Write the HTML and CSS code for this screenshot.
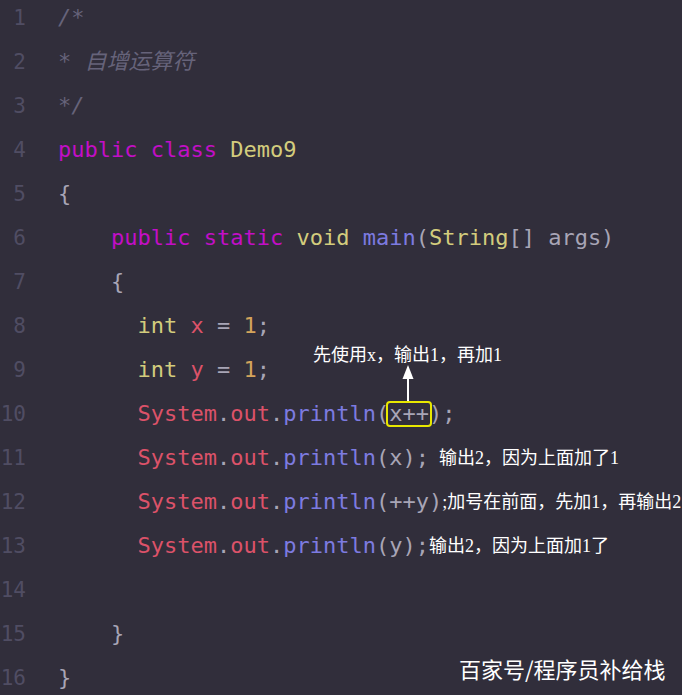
FILE: index.html
```html
<!DOCTYPE html>
<html lang="zh">
<head>
<meta charset="utf-8">
<title>Demo9</title>
<link rel="stylesheet" href="styles.css">
</head>
<body>
<div class="editor">
  <div class="code">
    <div class="line"><span class="ln">1</span><span class="src"><span class="cm">/*</span></span></div>
    <div class="line"><span class="ln">2</span><span class="src"><span class="cm">* 自增运算符</span></span></div>
    <div class="line"><span class="ln">3</span><span class="src"><span class="cm">*/</span></span></div>
    <div class="line"><span class="ln">4</span><span class="src"><span class="kw">public</span> <span class="kw">class</span> <span class="ty">Demo9</span></span></div>
    <div class="line"><span class="ln">5</span><span class="src">{</span></div>
    <div class="line"><span class="ln">6</span><span class="src">    <span class="kw">public</span> <span class="kw">static</span> <span class="ty">void</span> <span class="fn">main</span>(<span class="ty">String</span>[] args)</span></div>
    <div class="line"><span class="ln">7</span><span class="src">    {</span></div>
    <div class="line"><span class="ln">8</span><span class="src">      <span class="ty">int</span> <span class="var">x</span> = <span class="num">1</span>;</span></div>
    <div class="line"><span class="ln">9</span><span class="src">      <span class="ty">int</span> <span class="var">y</span> = <span class="num">1</span>;</span></div>
    <div class="line"><span class="ln">10</span><span class="src">      <span class="var">System</span>.<span class="var">out</span>.<span class="fn">println</span>(<span class="boxed">x++</span>);</span></div>
    <div class="line"><span class="ln">11</span><span class="src">      <span class="var">System</span>.<span class="var">out</span>.<span class="fn">println</span>(x);</span><span class="note gap">输出2，因为上面加了1</span></div>
    <div class="line"><span class="ln">12</span><span class="src">      <span class="var">System</span>.<span class="var">out</span>.<span class="fn">println</span>(++y)</span><span class="note">;加号在前面，先加1，再输出2</span></div>
    <div class="line"><span class="ln">13</span><span class="src">      <span class="var">System</span>.<span class="var">out</span>.<span class="fn">println</span>(y);</span><span class="note">输出2，因为上面加1了</span></div>
    <div class="line"><span class="ln">14</span><span class="src"></span></div>
    <div class="line"><span class="ln">15</span><span class="src">    }</span></div>
    <div class="line"><span class="ln">16</span><span class="src">}</span></div>
  </div>
  <div class="callout">先使用x，输出1，再加1</div>
  <svg class="arrow" width="14" height="36" viewBox="0 0 14 36">
    <polygon points="7,0 1.5,14 12.5,14" fill="#ffffff"/>
    <rect x="6" y="12" width="2" height="24" fill="#ffffff"/>
  </svg>
  <div class="watermark">百家号/程序员补给栈</div>
</div>
</body>
</html>
```
FILE: styles.css
```css
html, body {
  margin: 0;
  padding: 0;
  background: #312e3b;
}
.editor {
  position: relative;
  width: 682px;
  height: 695px;
  overflow: hidden;
  background: #312e3b;
}
.code {
  margin-top: -4px;
  font-family: "DejaVu Sans Mono", "Noto Sans CJK SC", monospace;
  font-size: 22px;
  color: #a8a5b6;
}
.line {
  display: flex;
  height: 44px;
  line-height: 44px;
  white-space: pre;
}
.ln {
  width: 26px;
  flex: none;
  text-align: right;
  color: #504d63;
  font-size: 21px;
  margin-right: 32px;
}
.src {
  white-space: pre;
}
.cm {
  color: #66637a;
  font-style: italic;
}
.kw { color: #c20ec6; }
.ty { color: #d3cc7d; }
.fn { color: #7d7be0; }
.var { color: #dc5269; }
.num { color: #d4a45b; }
.boxed {
  position: relative;
}
.boxed::after {
  content: "";
  position: absolute;
  left: -3px;
  right: -3px;
  top: 0;
  bottom: -1px;
  border: 2px solid #e8e800;
  border-radius: 4px;
}
.note {
  font-family: "Liberation Serif", "Noto Sans CJK SC", serif;
  font-size: 18px;
  color: #ffffff;
  white-space: nowrap;
}
.note.gap {
  margin-left: 10px;
}
.callout {
  position: absolute;
  left: 313px;
  top: 343px;
  font-family: "Liberation Serif", "Noto Sans CJK SC", serif;
  font-size: 18px;
  line-height: 24px;
  color: #ffffff;
  white-space: nowrap;
}
.arrow {
  position: absolute;
  left: 401px;
  top: 365px;
}
.watermark {
  position: absolute;
  left: 459px;
  top: 653px;
  font-family: "Noto Sans CJK SC", sans-serif;
  font-size: 22px;
  line-height: 30px;
  color: #ffffff;
  white-space: nowrap;
}
```
